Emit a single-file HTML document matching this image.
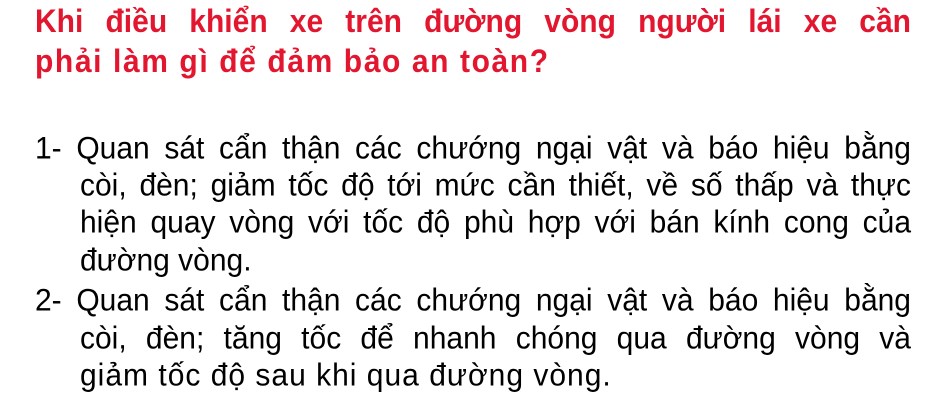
<!DOCTYPE html>
<html><head><meta charset="utf-8"><style>
html,body{margin:0;padding:0;background:#fff;width:945px;height:412px;overflow:hidden}
body{font-family:"Liberation Sans",Arial,sans-serif;position:relative}
.l{position:absolute;white-space:nowrap;line-height:1.15;transform:scaleY(1.05);transform-origin:0 0}
.j{text-align:justify;text-align-last:justify;white-space:normal}
.t{color:#e3162f;font-weight:bold;font-size:30px;left:35px;width:876px;transform:scaleY(1.08)}
.b{color:#000;font-size:30px}
</style></head><body>
<div class="l t j" style="top:4px">Khi điều khiển xe trên đường vòng người lái xe cần</div>
<div class="l t" style="top:44px;letter-spacing:1.6px">phải làm gì để đảm bảo an toàn?</div>

<div class="l b j" style="top:131px;left:35px;width:876px">1- Quan sát cẩn thận các chướng ngại vật và báo hiệu bằng</div>
<div class="l b j" style="top:168px;left:80px;width:831px">còi, đèn; giảm tốc độ tới mức cần thiết, về số thấp và thực</div>
<div class="l b j" style="top:205px;left:80px;width:831px">hiện quay vòng với tốc độ phù hợp với bán kính cong của</div>
<div class="l b" style="top:243px;left:80px">đường vòng.</div>
<div class="l b j" style="top:283px;left:35px;width:876px">2- Quan sát cẩn thận các chướng ngại vật và báo hiệu bằng</div>
<div class="l b j" style="top:321px;left:80px;width:831px">còi, đèn; tăng tốc để nhanh chóng qua đường vòng và</div>
<div class="l b" style="top:358px;left:80px;letter-spacing:1px">giảm tốc độ sau khi qua đường vòng.</div>
</body></html>
